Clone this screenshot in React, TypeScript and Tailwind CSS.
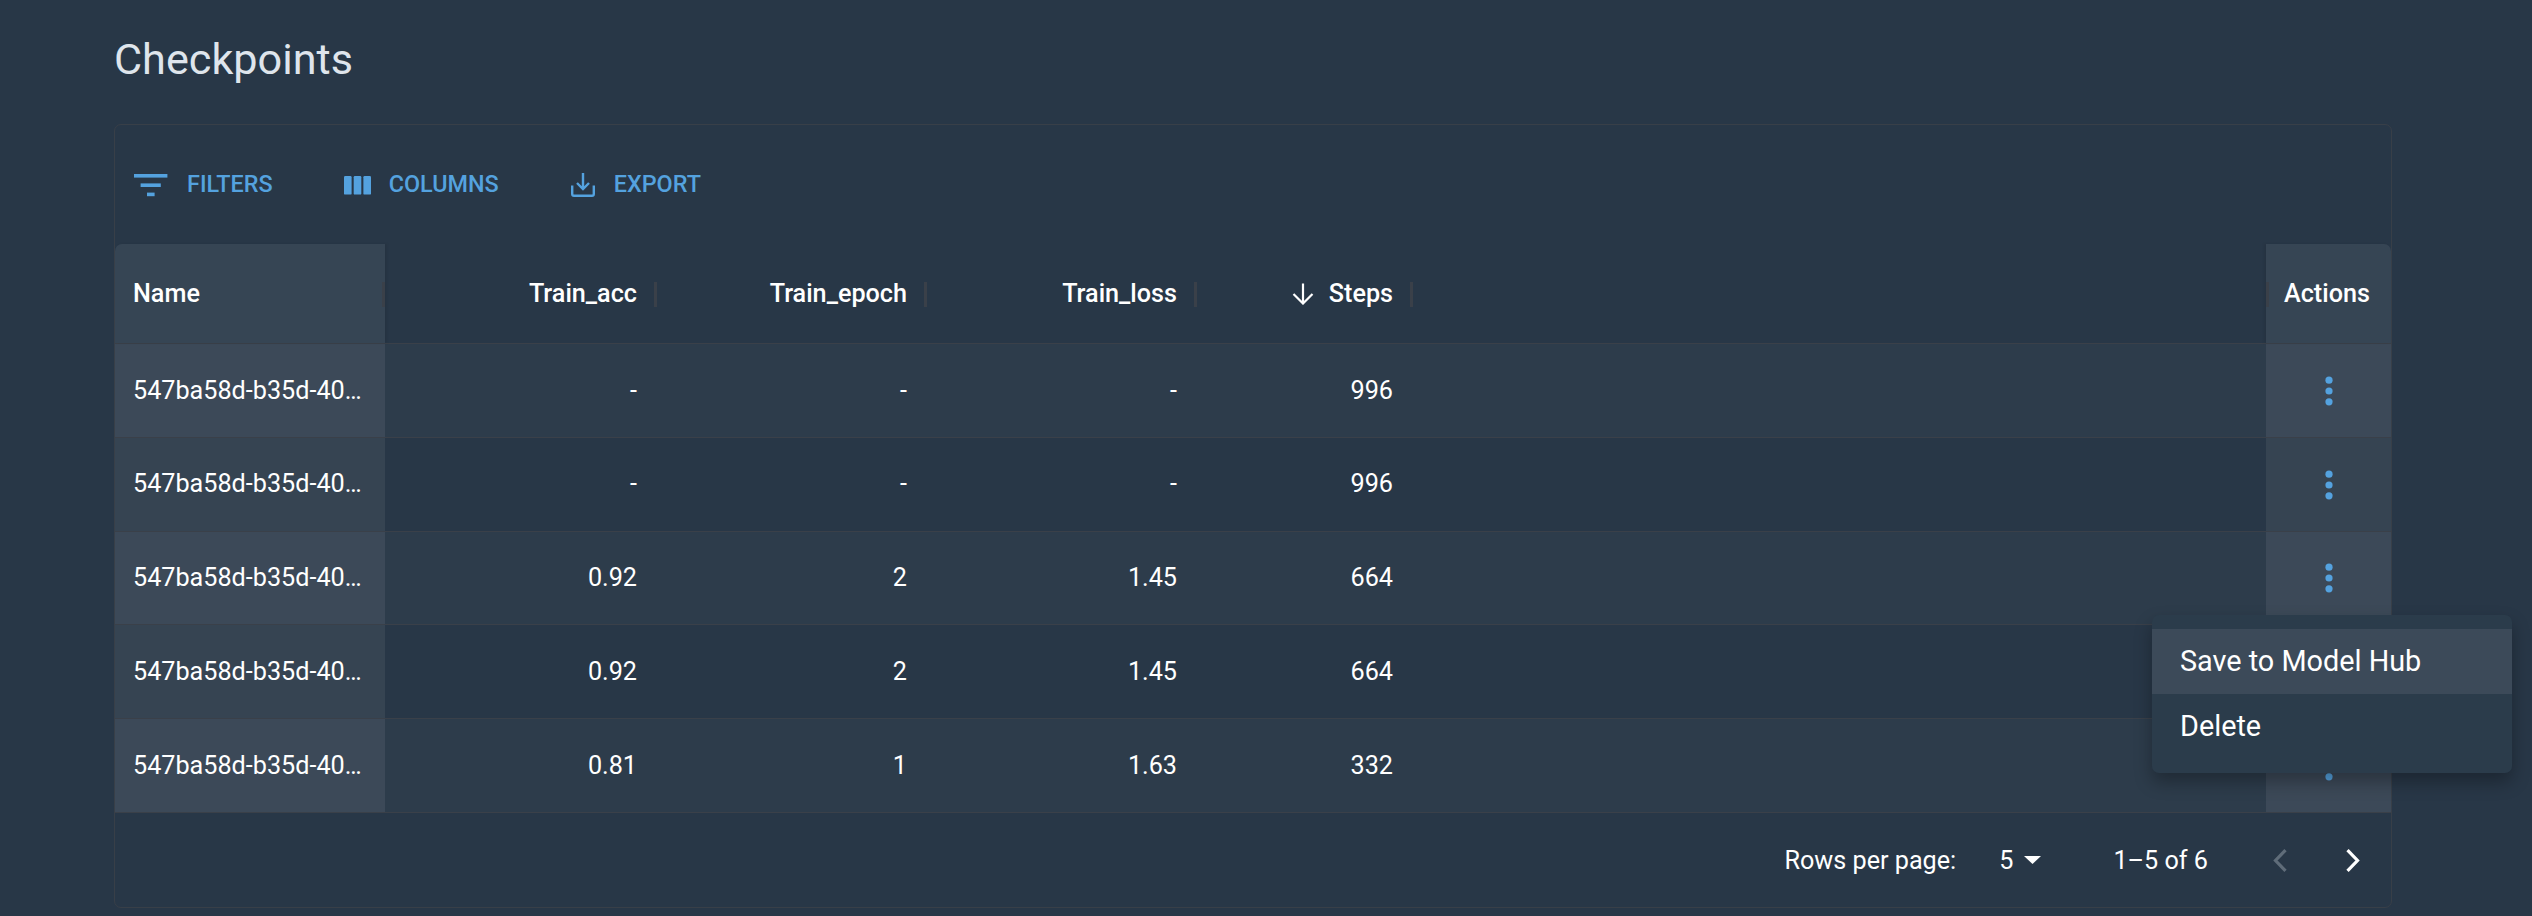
const rows = [
  { id: "r1", acc: "-", epoch: "-", loss: "-", steps: "996" },
  { id: "r2", acc: "-", epoch: "-", loss: "-", steps: "996" },
  { id: "r3", acc: "0.92", epoch: "2", loss: "1.45", steps: "664" },
  { id: "r4", acc: "0.92", epoch: "2", loss: "1.45", steps: "664" },
  { id: "r5", acc: "0.81", epoch: "1", loss: "1.63", steps: "332" },
];

const gridCols = "grid grid-cols-[270px_270px_270px_270px_216px_1fr_125px]";

function FilterIcon() {
  return (
    <svg width="34" height="23" viewBox="0 0 34 23" className="fill-[#54a2df]">
      <rect x="0" y="0" width="33.4" height="3.6" />
      <rect x="6.6" y="9.4" width="20.2" height="3.6" />
      <rect x="13" y="18.6" width="7.6" height="3.6" />
    </svg>
  );
}

function ColumnsIcon() {
  return (
    <svg width="27" height="19" viewBox="0 0 27 19" className="fill-[#54a2df]">
      <rect x="0" y="0" width="7.6" height="18.6" rx="1.2" />
      <rect x="9.7" y="0" width="7.6" height="18.6" rx="1.2" />
      <rect x="19.4" y="0" width="7.6" height="18.6" rx="1.2" />
    </svg>
  );
}

function ExportIcon() {
  return (
    <svg width="24" height="24" viewBox="0 0 24 24" fill="none" stroke="#54a2df" strokeWidth="2.4">
      <path d="M12 0v15.5M6 10l6 6 6-6" />
      <path d="M1.2 12.5V21a1.8 1.8 0 0 0 1.8 1.8h18a1.8 1.8 0 0 0 1.8-1.8v-8.5" />
    </svg>
  );
}

function MoreIcon() {
  return (
    <svg width="8" height="30" viewBox="0 0 8 30" className="fill-[#54a2df]">
      <circle cx="4" cy="4.2" r="3.6" />
      <circle cx="4" cy="15" r="3.6" />
      <circle cx="4" cy="25.8" r="3.6" />
    </svg>
  );
}

function HeaderCell({ label, sorted }: { label: string; sorted?: boolean }) {
  return (
    <div className="relative flex items-center justify-end px-[18px]">
      {sorted && (
        <svg width="22" height="22" viewBox="0 0 22 22" fill="none" stroke="#fff" strokeWidth="2.2" className="mr-[15px]">
          <path d="M11 0.5v20M1.5 11l9.5 9.5 9.5-9.5" />
        </svg>
      )}
      <span>{label}</span>
      <div className="absolute right-[-1.5px] top-[38px] h-[25px] w-[3px] bg-[#3a4049]" />
    </div>
  );
}

function NumCell({ value }: { value: string }) {
  return <div className="flex items-center justify-end px-[18px]">{value}</div>;
}

export default function App() {
  return (
    <div
      className="h-[916px] overflow-hidden bg-[#283747] pl-[114px] text-white"
      style={{ fontFamily: "Roboto, sans-serif" }}
    >
      <h1 className="flex h-[124px] items-center pb-[4px] text-[43.2px] font-normal text-[#dfe5ec]">Checkpoints</h1>

      <div className="relative w-[2278px] rounded-[7px] border border-[#383f48] text-[25.2px]">
        <div className="flex h-[119px] items-center pl-[19px] pt-[1px] text-[23.4px] font-medium text-[#54a2df]">
          <FilterIcon />
          <span className="ml-[19px] mr-[71px]">FILTERS</span>
          <ColumnsIcon />
          <span className="ml-[18px] mr-[72px]">COLUMNS</span>
          <ExportIcon />
          <span className="ml-[19px]">EXPORT</span>
        </div>

        <div className={`${gridCols} h-[100px] border-b border-[#3a4049] font-medium`}>
          <div className="relative flex items-center rounded-tl-[7px] bg-[#364554] px-[18px] shadow-[2px_0_3px_rgba(0,0,0,0.08)]">
            Name
            <div className="absolute right-0 top-[38px] h-[25px] w-[3px] bg-[#3a4049]" />
          </div>
          <HeaderCell label="Train_acc" />
          <HeaderCell label="Train_epoch" />
          <HeaderCell label="Train_loss" />
          <HeaderCell label="Steps" sorted />
          <div />
          <div className="relative flex items-center rounded-tr-[7px] bg-[#364554] px-[18px] shadow-[-2px_0_3px_rgba(0,0,0,0.08)]">
            Actions
            <div className="absolute left-0 top-[38px] h-[25px] w-[3px] bg-[#3a4049]" />
          </div>
        </div>

        {rows.map((r, i) => {
          const odd = i % 2 === 0;
          const pinned = odd ? "bg-[#3c4958]" : "bg-[#364452]";
          return (
            <div
              key={r.id}
              className={`${gridCols} h-[93.8px] border-b border-[#3a4049] ${odd ? "bg-[#2d3c4b]" : "bg-[#283747]"}`}
            >
              <div className={`flex items-center overflow-hidden pl-[18px] pr-[18px] ${pinned}`}>
                <span className="truncate">547ba58d-b35d-40c2-9f1e</span>
              </div>
              <NumCell value={r.acc} />
              <NumCell value={r.epoch} />
              <NumCell value={r.loss} />
              <NumCell value={r.steps} />
              <div />
              <div className={`flex items-center justify-center pt-[1px] ${pinned}`}>
                <MoreIcon />
              </div>
            </div>
          );
        })}

        <div className="flex h-[94px] items-center justify-end pt-[1px]">
          <span>Rows per page:</span>
          <span className="ml-[43px]">5</span>
          <svg width="17" height="8" viewBox="0 0 17 8" className="ml-[11px] fill-white">
            <path d="M0 0h17l-8.5 8z" />
          </svg>
          <span className="ml-[72px]">1–5 of 6</span>
          <svg width="14" height="23" viewBox="0 0 14 23" fill="none" stroke="#5f6c79" strokeWidth="3.2" className="ml-[65px]">
            <path d="M12.5 1.2 2.5 11.5l10 10.3" />
          </svg>
          <svg width="14" height="23" viewBox="0 0 14 23" fill="none" stroke="#fff" strokeWidth="3.2" className="ml-[59px] mr-[31px]">
            <path d="M1.5 1.2 11.5 11.5l-10 10.3" />
          </svg>
        </div>

        <div className="absolute left-[2037px] top-[490px] w-[360px] rounded-[7px] bg-[#2b3c4b] py-[14px] text-[28.8px] shadow-[0_9px_18px_rgba(0,0,0,0.3)]">
          <div className="flex h-[65px] items-center bg-[#3c4a59] px-[28px]">Save to Model Hub</div>
          <div className="flex h-[65px] items-center px-[28px]">Delete</div>
        </div>
      </div>
    </div>
  );
}
